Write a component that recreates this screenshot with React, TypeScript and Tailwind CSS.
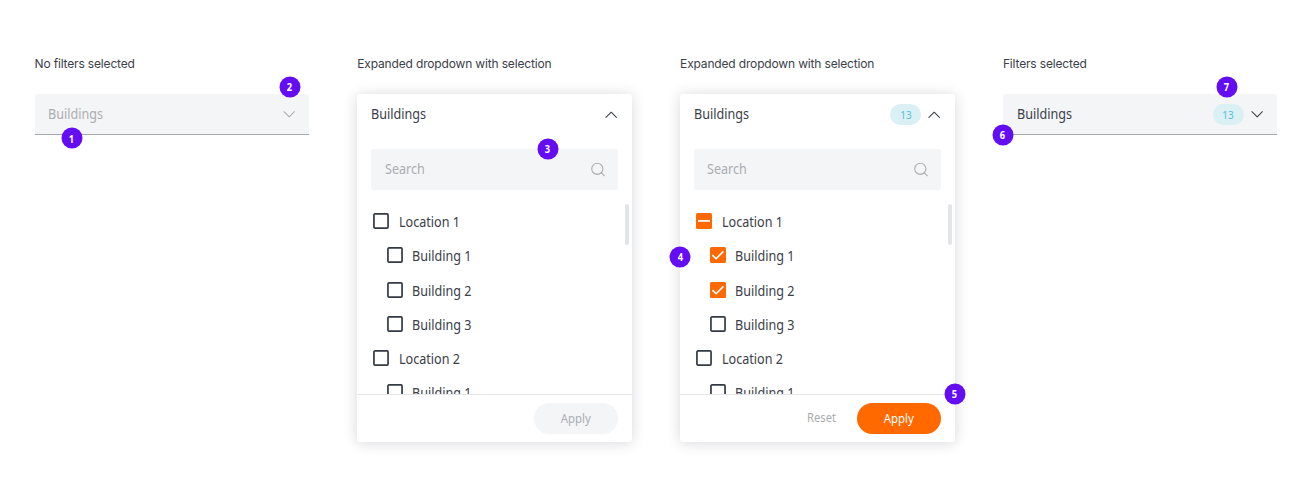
import type { ReactNode } from "react";

function Label({ children, className = "" }: { children: ReactNode; className?: string }) {
  return (
    <span className={`inline-block origin-left scale-x-[0.92] whitespace-nowrap text-[13.7px] leading-5 ${className}`}>
      {children}
    </span>
  );
}

function Chevron({ up = false }: { up?: boolean }) {
  return (
    <svg width="14" height="14" viewBox="0 0 14 14" fill="none" stroke="currentColor" strokeWidth="1.05" strokeLinecap="round" strokeLinejoin="round" className="shrink-0">
      <path d={up ? "M1.9 9.4 7.2 4.2l5.2 5.2" : "M1.9 4.7 7.2 9.9l5.2-5.2"} />
    </svg>
  );
}

function Marker({ n, className }: { n: number; className: string }) {
  return (
    <span className={`absolute z-10 flex size-[21px] -translate-x-1/2 -translate-y-1/2 items-center justify-center rounded-full bg-[#640df2] text-[10.3px] leading-none font-bold text-white ${className}`}>
      <span className="inline-block scale-x-90">{n}</span>
    </span>
  );
}

function Count() {
  return (
    <span className="mr-1.5 flex h-[21px] w-[31px] items-center justify-center rounded-full bg-[#daf0f5] text-[10.5px] leading-none text-[#58bdd6]">
      <span className="inline-block translate-y-[0.5px] scale-x-95">13</span>
    </span>
  );
}

type State = "off" | "on" | "mixed";

function Box({ state }: { state: State }) {
  return (
    <svg width="16" height="16" viewBox="0 0 16 16" fill="none" className="shrink-0">
      {state === "off" ? (
        <rect x="0.95" y="0.95" width="14.1" height="14.1" rx="1" stroke="#343a43" strokeWidth="1.7" />
      ) : (
        <rect width="16" height="16" rx="1.5" fill="#ff6900" />
      )}
      {state === "on" && <path d="m2.4 8.2 3.7 3.5 7.3-7.3" stroke="#fff" strokeWidth="1.6" />}
      {state === "mixed" && <path d="M2 7.9h12" stroke="#fff" strokeWidth="1.7" />}
    </svg>
  );
}

function Row({ text, state = "off", child = false }: { text: string; state?: State; child?: boolean }) {
  return (
    <div className={`flex h-[34.25px] shrink-0 items-center gap-[9.5px] ${child ? "pl-[29.7px]" : "pl-4"}`}>
      <Box state={state} />
      <Label className="relative top-px">{text}</Label>
    </div>
  );
}

function Column({ title, children }: { title: string; children: ReactNode }) {
  return (
    <section className="w-[274.5px] shrink-0">
      <h2 className="mb-[21px] h-5 font-['Inter'] text-[12px] leading-[21px] tracking-[-0.16px] whitespace-nowrap">{title}</h2>
      <div className="relative">{children}</div>
    </section>
  );
}

function Field({ selected = false }: { selected?: boolean }) {
  return (
    <div className={`flex h-[41px] items-center rounded-t-[3px] border-b border-[#a5a8ae] bg-[#f4f5f7] pr-[13.5px] pl-[13.7px] ${selected ? "" : "text-[#abadb1]"}`}>
      <Label>Buildings</Label>
      <span className="flex-1" />
      {selected && <Count />}
      <Chevron />
    </div>
  );
}

function Panel({ selected = false }: { selected?: boolean }) {
  return (
    <div className="flex h-[348px] flex-col rounded-[3px] bg-white shadow-[0_1px_14px_rgba(45,50,65,0.19)]">
      <div className="flex h-[41px] shrink-0 items-center pr-[13.5px] pl-[13.7px]">
        <Label className="relative -top-px">Buildings</Label>
        <span className="flex-1" />
        {selected && <Count />}
        <Chevron up />
      </div>
      <div className="mx-[13.7px] mt-3.5 flex h-[41px] shrink-0 items-center justify-between rounded-[3px] bg-[#f4f5f7] pr-[13.2px] pl-[13.7px] text-[#abadb1]">
        <Label className="relative -top-px">Search</Label>
        <svg width="14" height="14" viewBox="0 0 14 14" fill="none" stroke="currentColor" strokeWidth="1.1" strokeLinecap="round" className="-translate-y-[0.5px]">
          <circle cx="6.3" cy="6.3" r="5.6" />
          <path d="m10.4 10.4 3 3" />
        </svg>
      </div>
      <div className="flex h-[205px] shrink-0 overflow-hidden border-b border-[#e5e6e8] pt-[14px]">
        <div className="flex flex-1 flex-col">
          <Row text="Location 1" state={selected ? "mixed" : "off"} />
          <Row text="Building 1" state={selected ? "on" : "off"} child />
          <Row text="Building 2" state={selected ? "on" : "off"} child />
          <Row text="Building 3" child />
          <Row text="Location 2" />
          <Row text="Building 1" child />
        </div>
        <div className="mr-[3px] h-[41px] w-1 rounded-full bg-[#e3e4e6]" />
      </div>
      <div className="flex flex-1 items-center justify-end pr-[13.7px]">
        {selected && <button className="mr-5 -translate-y-px text-[12px] text-[#abadb1]"><span className="inline-block scale-x-[0.93]">Reset</span></button>}
        <button className={`h-[31px] w-[84px] rounded-full text-[12px] ${selected ? "bg-[#ff6900] text-white" : "bg-[#f4f5f7] text-[#abadb1]"}`}>
          <span className="inline-block scale-x-95">Apply</span>
        </button>
      </div>
    </div>
  );
}

export default function App() {
  return (
    <main className="flex h-[499px] w-[1312px] gap-[48.3px] overflow-hidden bg-white pt-[53px] pl-[34.5px] font-['Noto_Sans',sans-serif] text-[#3b4049]">
      <Column title="No filters selected">
        <Field />
        <Marker n={1} className="top-[44.3px] left-[37px]" />
        <Marker n={2} className="top-[-7px] left-[255px]" />
      </Column>
      <Column title="Expanded dropdown with selection">
        <Panel />
        <Marker n={3} className="top-[54.7px] left-[190.5px]" />
      </Column>
      <Column title="Expanded dropdown with selection">
        <Panel selected />
        <Marker n={4} className="top-[162.7px] left-0" />
        <Marker n={5} className="top-[300px] left-[274.5px]" />
      </Column>
      <Column title="Filters selected">
        <Field selected />
        <Marker n={6} className="top-[41px] left-0" />
        <Marker n={7} className="top-[-7px] left-[224px]" />
      </Column>
    </main>
  );
}
